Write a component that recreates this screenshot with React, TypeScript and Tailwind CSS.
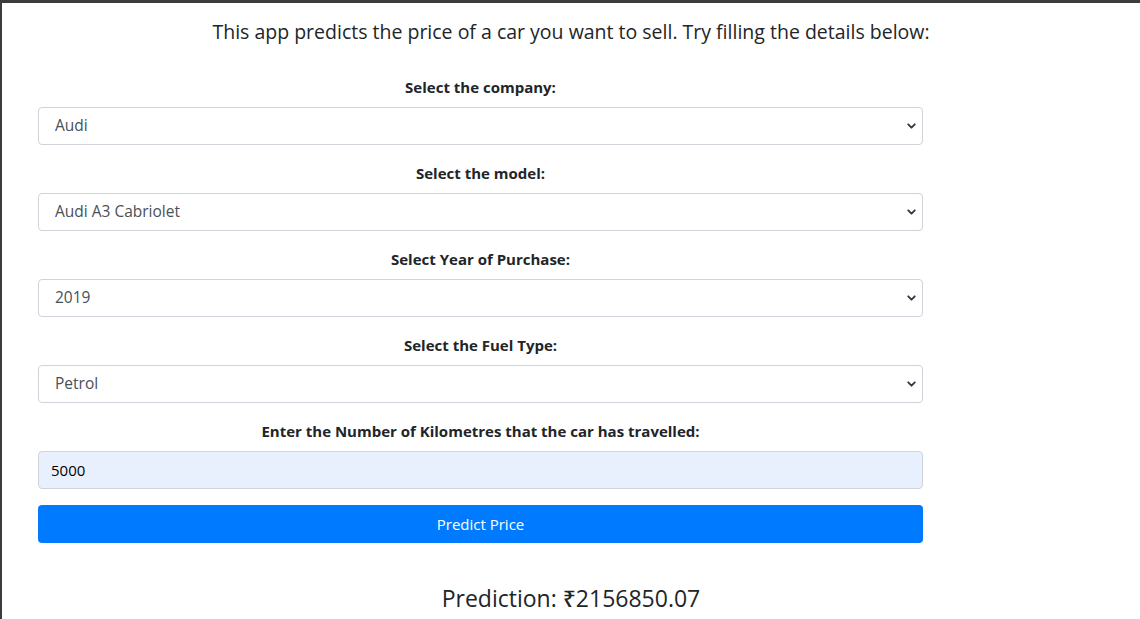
import { ChevronDown } from "lucide-react";

const fields = [
  { label: "Select the company:", value: "Audi" },
  { label: "Select the model:", value: "Audi A3 Cabriolet" },
  { label: "Select Year of Purchase:", value: "2019" },
  { label: "Select the Fuel Type:", value: "Petrol" },
];

function SelectBox({ value }: { value: string }) {
  return (
    <div className="relative">
      <select
        defaultValue={value}
        className="w-full h-[38px] appearance-none rounded-[4px] border border-[#ced4da] bg-white pl-[16px] pr-8 text-[15.5px] text-[#495057] outline-none"
      >
        <option>{value}</option>
      </select>
      <ChevronDown
        size={13}
        strokeWidth={3.5}
        className="pointer-events-none absolute right-[5px] top-1/2 -translate-y-1/2 text-[#343a40]"
      />
    </div>
  );
}

export default function App() {
  return (
    <div
      className="min-h-[619px] border-t-[3px] border-l-2 border-[#3c3c3c] bg-white text-[#212529]"
      style={{ fontFamily: '"Open Sans", "Noto Sans", sans-serif' }}
    >
      <h5 className="pt-[16px] text-center text-[19.5px] font-medium leading-[26px]">
        This app predicts the price of a car you want to sell. Try filling the details below:
      </h5>

      <form className="ml-[36px] mt-[30px] w-[885px]">
        {fields.map((f) => (
          <div key={f.label} className="mb-4">
            <label className="mb-2 block text-center text-[15px] font-bold leading-[24px]">
              {f.label}
            </label>
            <SelectBox value={f.value} />
          </div>
        ))}

        <div className="mb-4">
          <label className="mb-2 block text-center text-[15px] font-bold leading-[24px]">
            Enter the Number of Kilometres that the car has travelled:
          </label>
          <input
            defaultValue="5000"
            className="block h-[38px] w-full rounded-[4px] border border-[#ced4da] bg-[#e8f0fe] px-[12px] text-[15px] text-black outline-none"
          />
        </div>

        <button
          type="button"
          className="block h-[38px] w-full rounded-[4px] bg-[#007bff] text-[15px] text-white"
        >
          Predict Price
        </button>
      </form>

      <h3 className="mt-[40px] text-center text-[23px] font-medium leading-[30px]">
        Prediction: ₹2156850.07
      </h3>
    </div>
  );
}
